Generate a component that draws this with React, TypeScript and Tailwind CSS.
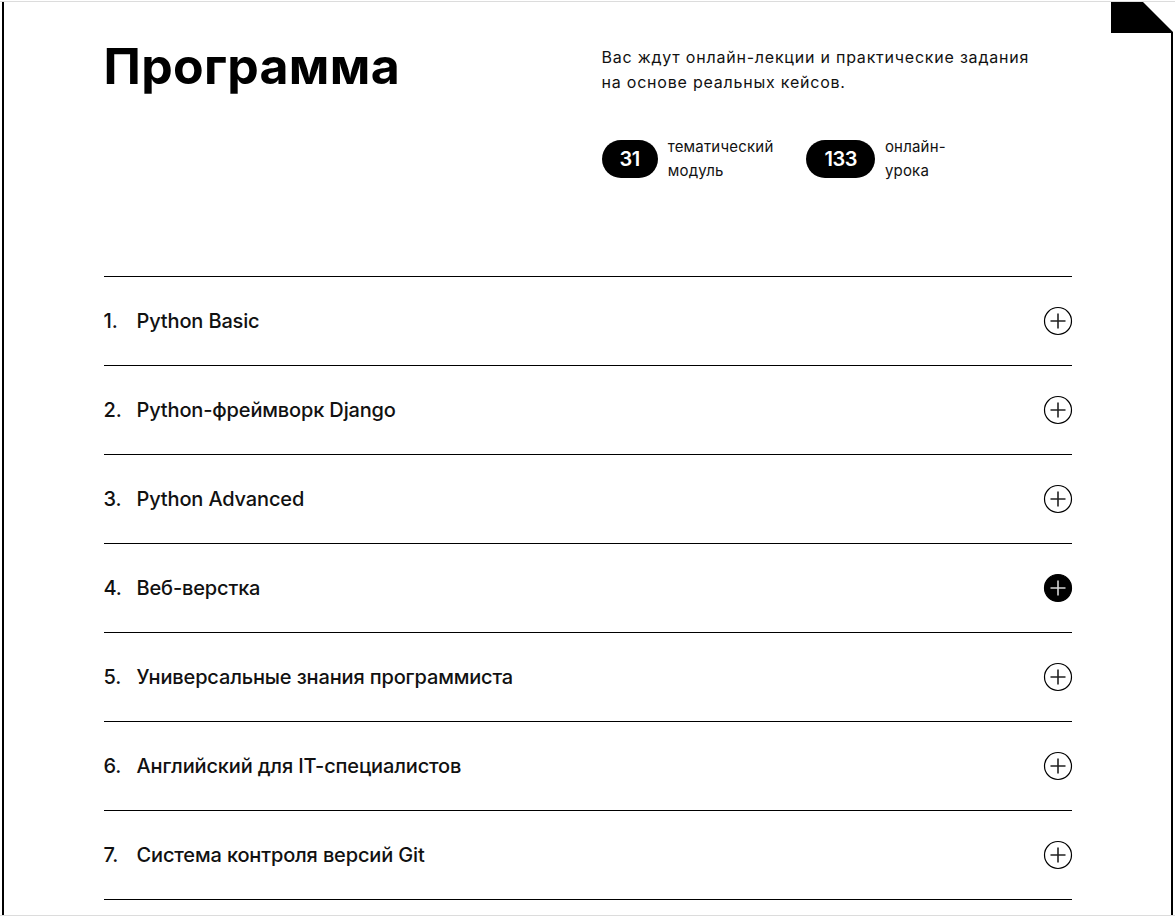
const modules = [
  "Python Basic",
  "Python-фреймворк Django",
  "Python Advanced",
  "Веб-верстка",
  "Универсальные знания программиста",
  "Английский для IT-специалистов",
  "Система контроля версий Git",
];

const PlusIcon = ({ active }: { active?: boolean }) => (
  <svg width="30" height="30" viewBox="0 0 30 30" className="shrink-0">
    <circle
      cx="15"
      cy="15"
      r="13.5"
      fill={active ? "#000" : "none"}
      stroke="#000"
      strokeWidth="1.2"
    />
    <path
      d="M15 7.5v15M7.5 15h15"
      stroke={active ? "#d4d4d4" : "#222"}
      strokeWidth="1.6"
    />
  </svg>
);

const Stat = ({ value, label }: { value: string; label: string[] }) => (
  <div className="flex items-center">
    <span className="flex h-[38px] items-center justify-center rounded-full bg-black px-[18px] text-[20px] font-semibold tracking-[-0.5px] text-white">
      {value}
    </span>
    <span className="ml-[10px] text-[15px] leading-[24px] tracking-[0.2px] text-[#111]">
      {label[0]}
      <br />
      {label[1]}
    </span>
  </div>
);

const App = () => {
  return (
    <div className="h-[922px] w-full overflow-hidden bg-white font-['Inter',sans-serif] text-black">
      <div className="mt-[1px] h-[915px] border-y border-[#dcdcdc]">
        <div className="relative mx-[2px] h-full border-x-2 border-black">
          <svg
            className="absolute -right-[2px] top-0"
            width="66"
            height="31"
            viewBox="0 0 66 31"
          >
            <rect x="0" y="0" width="66" height="31" fill="#fff" />
            <polygon points="4,0 36,0 66,30 66,31 4,31" fill="#000" />
          </svg>

          <div className="mx-auto w-[968px]">
            <div className="flex pt-[39px]">
              <h1 className="w-[498px] shrink-0 text-[50px] font-bold leading-[50px] tracking-[0.3px]">
                Программа
              </h1>
              <div className="pt-[4px]">
                <p className="w-[445px] text-[16px] leading-[25px] tracking-[0.78px] text-[#111]">
                  Вас ждут онлайн-лекции и практические задания на основе реальных кейсов.
                </p>
                <div className="mt-[40px] flex gap-[33px]">
                  <Stat value="31" label={["тематический", "модуль"]} />
                  <Stat value="133" label={["онлайн-", "урока"]} />
                </div>
              </div>
            </div>

            <ul className="mt-[93px] border-t border-black">
              {modules.map((title, i) => (
                <li
                  key={title}
                  className="flex h-[89px] items-center border-b border-black text-[20px] font-medium tracking-[-0.15px] text-[#111]"
                >
                  <span className="w-[33px] shrink-0">{i + 1}.</span>
                  <span className="flex-1">{title}</span>
                  <span className="-mr-[1px]">
                    <PlusIcon active={i === 3} />
                  </span>
                </li>
              ))}
            </ul>
          </div>
        </div>
      </div>
    </div>
  );
};

export default App;
